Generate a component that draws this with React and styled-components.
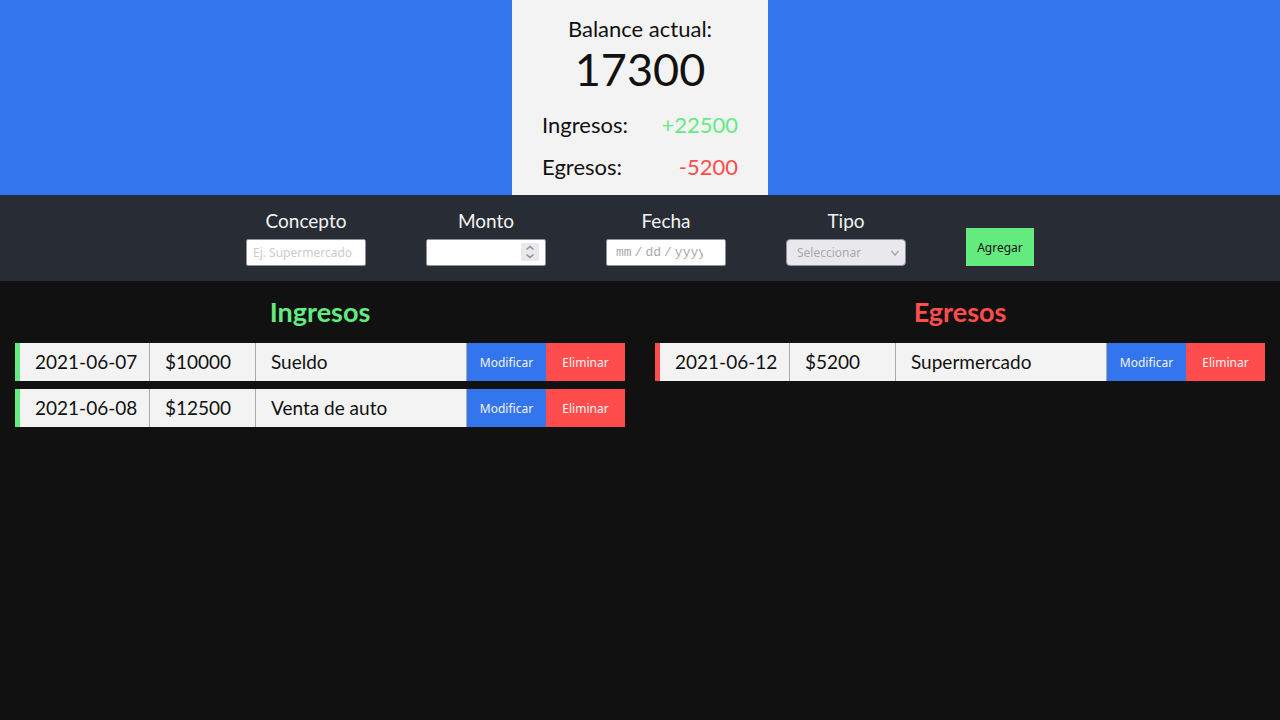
import React from "react";
import styled, { createGlobalStyle } from "styled-components";

const GlobalStyle = createGlobalStyle`
  *, *::before, *::after { box-sizing: border-box; }
  body {
    margin: 0;
    background: #111111;
    color: #111111;
    font-family: Lato, sans-serif;
    font-size: 19px;
  }
`;

const colors = {
  green: "#64eb80",
  red: "#ff4d4d",
  blue: "#3375ed",
  light: "#f3f3f3",
  slate: "#282c34",
};

const Header = styled.header`
  display: flex;
  justify-content: center;
  background: ${colors.blue};
`;

const BalancePanel = styled.div`
  width: 20%;
  min-width: 256px;
  padding: 15px 30px;
  background: ${colors.light};
  font-size: 22px;
  line-height: 27px;
`;

const BalanceTitle = styled.p`
  margin: 0;
  text-align: center;
`;

const BalanceAmount = styled.p`
  margin: 0;
  text-align: center;
  font-size: 45px;
  line-height: 54px;
`;

const TotalRow = styled.div`
  display: flex;
  justify-content: space-between;
  margin-top: 15px;
`;

const Total = styled.span`
  color: ${(p) => colors[p.$tone]};
`;

const Form = styled.form`
  display: flex;
  flex-wrap: wrap;
  justify-content: center;
  align-items: flex-end;
  gap: 15px 60px;
  padding: 14px 15px 15px;
  background: ${colors.slate};
`;

const Field = styled.div`
  display: flex;
  flex-direction: column;
  align-items: center;
  gap: 6px;
  width: 120px;
`;

const Label = styled.label`
  color: ${colors.light};
  line-height: 24px;
`;

const InputWrap = styled.div`
  position: relative;
  width: 100%;
  height: 27px;
`;

const Input = styled.input`
  display: block;
  width: 100%;
  height: 27px;
  padding: 0 6px;
  border: 1px solid #8f8f9d;
  border-radius: 2px;
  background: #ffffff;
  color: #111111;
  font: 12px "Noto Sans", sans-serif;
  &::placeholder { color: #cccccc; }
`;

const NumberInput = styled(Input)`
  appearance: textfield;
  padding-right: 28px;
  &::-webkit-inner-spin-button { appearance: none; }
`;

const DateInput = styled(Input)`
  padding: 0 22px 0 8px;
  color: #aaaaaa;
  font: 13px "Liberation Mono", monospace;
  &::-webkit-calendar-picker-indicator { display: none; }
  &::-webkit-datetime-edit { overflow: hidden; }
  &::-webkit-datetime-edit-text { padding: 0 2px; }
`;

const Spinner = styled.svg`
  position: absolute;
  top: 4px;
  right: 7px;
  pointer-events: none;
`;

const Select = styled.select`
  display: block;
  appearance: none;
  width: 100%;
  height: 27px;
  padding: 0 24px 0 10px;
  border: 1px solid #8f8f9d;
  border-radius: 4px;
  background: #e9e9ed;
  color: #aaaaaa;
  font: 12px "Noto Sans", sans-serif;
`;

const Arrow = styled.svg`
  position: absolute;
  top: 10px;
  right: 6px;
  pointer-events: none;
`;

const Button = styled.button`
  display: block;
  height: 38px;
  padding: 0;
  border: 0;
  font: 12px "Noto Sans", sans-serif;
  cursor: pointer;
`;

const AddButton = styled(Button)`
  width: 68px;
  background: ${colors.green};
  color: #111111;
`;

const RowButton = styled(Button)`
  width: 100%;
  background: ${(p) => colors[p.$tone]};
  color: ${colors.light};
`;

const Lists = styled.main`
  display: grid;
  grid-template-columns: repeat(auto-fit, minmax(500px, 1fr));
  gap: 30px;
  padding: 15px;
`;

const ListTitle = styled.h2`
  margin: 0;
  color: ${(p) => colors[p.$tone]};
  font-size: 27px;
  line-height: 32px;
  text-align: center;
`;

const Table = styled.table`
  width: 100%;
  margin-top: 7px;
  table-layout: fixed;
  border-collapse: separate;
  border-spacing: 0 8px;
`;

const Column = styled.col`
  width: ${(p) => p.$width};
`;

const Cell = styled.td`
  height: 38px;
  padding: 0 15px;
  border-right: 1px solid #aaaaaa;
  background: ${colors.light};
  line-height: 24px;
  white-space: nowrap;
  &:first-child { border-left: 5px solid ${(p) => colors[p.$tone]}; }
`;

const ActionCell = styled.td`
  padding: 0;
`;

const income = [
  { date: "2021-06-07", amount: 10000, concept: "Sueldo" },
  { date: "2021-06-08", amount: 12500, concept: "Venta de auto" },
];

const expenses = [{ date: "2021-06-12", amount: 5200, concept: "Supermercado" }];

function MovementList({ id, title, tone, items }) {
  return (
    <section aria-labelledby={id}>
      <ListTitle id={id} $tone={tone}>{title}</ListTitle>
      <Table aria-labelledby={id}>
        <colgroup>
          <Column $width="135px" />
          <Column $width="106px" />
          <Column $width="auto" />
          <Column $width="79px" />
          <Column $width="79px" />
        </colgroup>
        <tbody>
          {items.map((item) => (
            <tr key={item.date}>
              <Cell $tone={tone}>{item.date}</Cell>
              <Cell $tone={tone}>${item.amount}</Cell>
              <Cell $tone={tone}>{item.concept}</Cell>
              <ActionCell><RowButton type="button" $tone="blue">Modificar</RowButton></ActionCell>
              <ActionCell><RowButton type="button" $tone="red">Eliminar</RowButton></ActionCell>
            </tr>
          ))}
        </tbody>
      </Table>
    </section>
  );
}

export default function App() {
  return (
    <>
      <GlobalStyle />
      <Header>
        <BalancePanel>
          <BalanceTitle>Balance actual:</BalanceTitle>
          <BalanceAmount>17300</BalanceAmount>
          <TotalRow><span>Ingresos:</span><Total $tone="green">+22500</Total></TotalRow>
          <TotalRow><span>Egresos:</span><Total $tone="red">-5200</Total></TotalRow>
        </BalancePanel>
      </Header>
      <Form onSubmit={(e) => e.preventDefault()}>
        <Field>
          <Label htmlFor="concepto">Concepto</Label>
          <Input id="concepto" type="text" placeholder="Ej. Supermercado" />
        </Field>
        <Field>
          <Label htmlFor="monto">Monto</Label>
          <InputWrap>
            <NumberInput id="monto" type="number" />
            <Spinner width="18" height="18" viewBox="0 0 18 18" fill="none" aria-hidden="true">
              <rect width="18" height="18" fill="#e9e9ed" />
              <path d="M5.5 6.5 9 3.5l3.5 3M5.5 11.5l3.5 3 3.5-3" stroke="#8f8f9d" strokeWidth="1.5" />
            </Spinner>
          </InputWrap>
        </Field>
        <Field>
          <Label htmlFor="fecha">Fecha</Label>
          <DateInput id="fecha" type="date" />
        </Field>
        <Field>
          <Label htmlFor="tipo">Tipo</Label>
          <InputWrap>
            <Select id="tipo" defaultValue="">
              <option value="">Seleccionar</option>
              <option value="ingreso">Ingreso</option>
              <option value="egreso">Egreso</option>
            </Select>
            <Arrow width="10" height="8" viewBox="0 0 10 8" fill="none" aria-hidden="true">
              <path d="M1.5 2 5 6l3.5-4" stroke="#aaaaaa" strokeWidth="1.5" />
            </Arrow>
          </InputWrap>
        </Field>
        <AddButton type="submit">Agregar</AddButton>
      </Form>
      <Lists>
        <MovementList id="ingresos" title="Ingresos" tone="green" items={income} />
        <MovementList id="egresos" title="Egresos" tone="red" items={expenses} />
      </Lists>
    </>
  );
}
